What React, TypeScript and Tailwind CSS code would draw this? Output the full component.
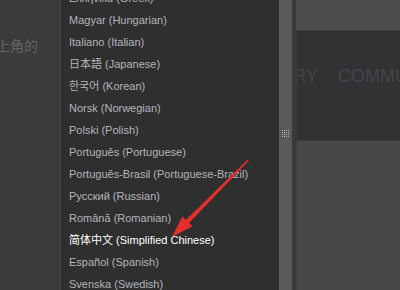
const languages = [
  "Ελληνικά (Greek)",
  "Magyar (Hungarian)",
  "Italiano (Italian)",
  "日本語 (Japanese)",
  "한국어 (Korean)",
  "Norsk (Norwegian)",
  "Polski (Polish)",
  "Português (Portuguese)",
  "Português-Brasil (Portuguese-Brazil)",
  "Русский (Russian)",
  "Română (Romanian)",
  "简体中文 (Simplified Chinese)",
  "Español (Spanish)",
  "Svenska (Swedish)",
]

function Grip() {
  return (
    <svg width="7" height="7" viewBox="0 0 7 7">
      {[0, 2, 4, 6].map((x) =>
        [0, 2, 4, 6].map((y) => <rect key={x + "-" + y} x={x} y={y} width="1" height="1" fill="#b5b5b5" />)
      )}
    </svg>
  )
}

export default function App() {
  return (
    <div
      className="relative flex h-[290px] w-[400px] overflow-hidden bg-[#3b3b3b]"
      style={{ fontFamily: '"Liberation Sans", Arial, "Noto Sans CJK SC", "Noto Sans CJK KR", "Noto Sans CJK JP", sans-serif' }}
    >
      {/* page behind the menu */}
      <div className="w-[61px] shrink-0 overflow-hidden border-r border-[#454545] bg-[#3b3b3b] pt-[38px]">
        <div className="-ml-[4px] whitespace-nowrap text-[14px] leading-[16px] text-[#666666]">上角的</div>
      </div>

      {/* language list */}
      <div className="w-[218px] shrink-0 overflow-hidden bg-[#2f2f30] pl-[8px]">
        <div className="-mt-[13px] flex flex-col">
          {languages.map((lang) => (
            <div
              key={lang}
              className={
                "flex h-[22px] items-center whitespace-nowrap text-[11px] " +
                (lang.startsWith("简体") ? "text-white" : "text-[#b3b5b8]")
              }
            >
              {lang}
            </div>
          ))}
        </div>
      </div>

      {/* scrollbar */}
      <div className="flex w-[13px] shrink-0 flex-col items-center bg-[#5a5a5a] pt-[130px]">
        <Grip />
      </div>
      <div className="w-[4px] shrink-0 bg-[#393939]" />

      {/* right content */}
      <div className="flex flex-1 flex-col overflow-hidden">
        <div className="h-[30px] shrink-0 border-b border-[#555555] bg-[#4b4b4b]" />
        <div className="flex h-[110px] shrink-0 items-center overflow-hidden border-l border-[#3c3c3c] bg-[#313234] pb-[18px] text-[18px] text-[#454648]">
          <div className="flex w-[21px] shrink-0 justify-end">
            <span className="whitespace-nowrap">LIBRARY</span>
          </div>
          <span className="ml-[20px] whitespace-nowrap">COMMUNITY</span>
        </div>
        <div className="flex-1 border-l border-t border-[#3f3f3f] bg-[#484848]" />
      </div>

      {/* red annotation arrow */}
      <svg className="pointer-events-none absolute left-0 top-0" width="400" height="290" viewBox="0 0 400 290">
        <polygon
          points="248.9,160.6 189,222.9 192.4,226.3 172,237 182.4,216.5 185.8,219.9 247.7,159.4"
          fill="#e4302b"
        />
      </svg>
    </div>
  )
}
